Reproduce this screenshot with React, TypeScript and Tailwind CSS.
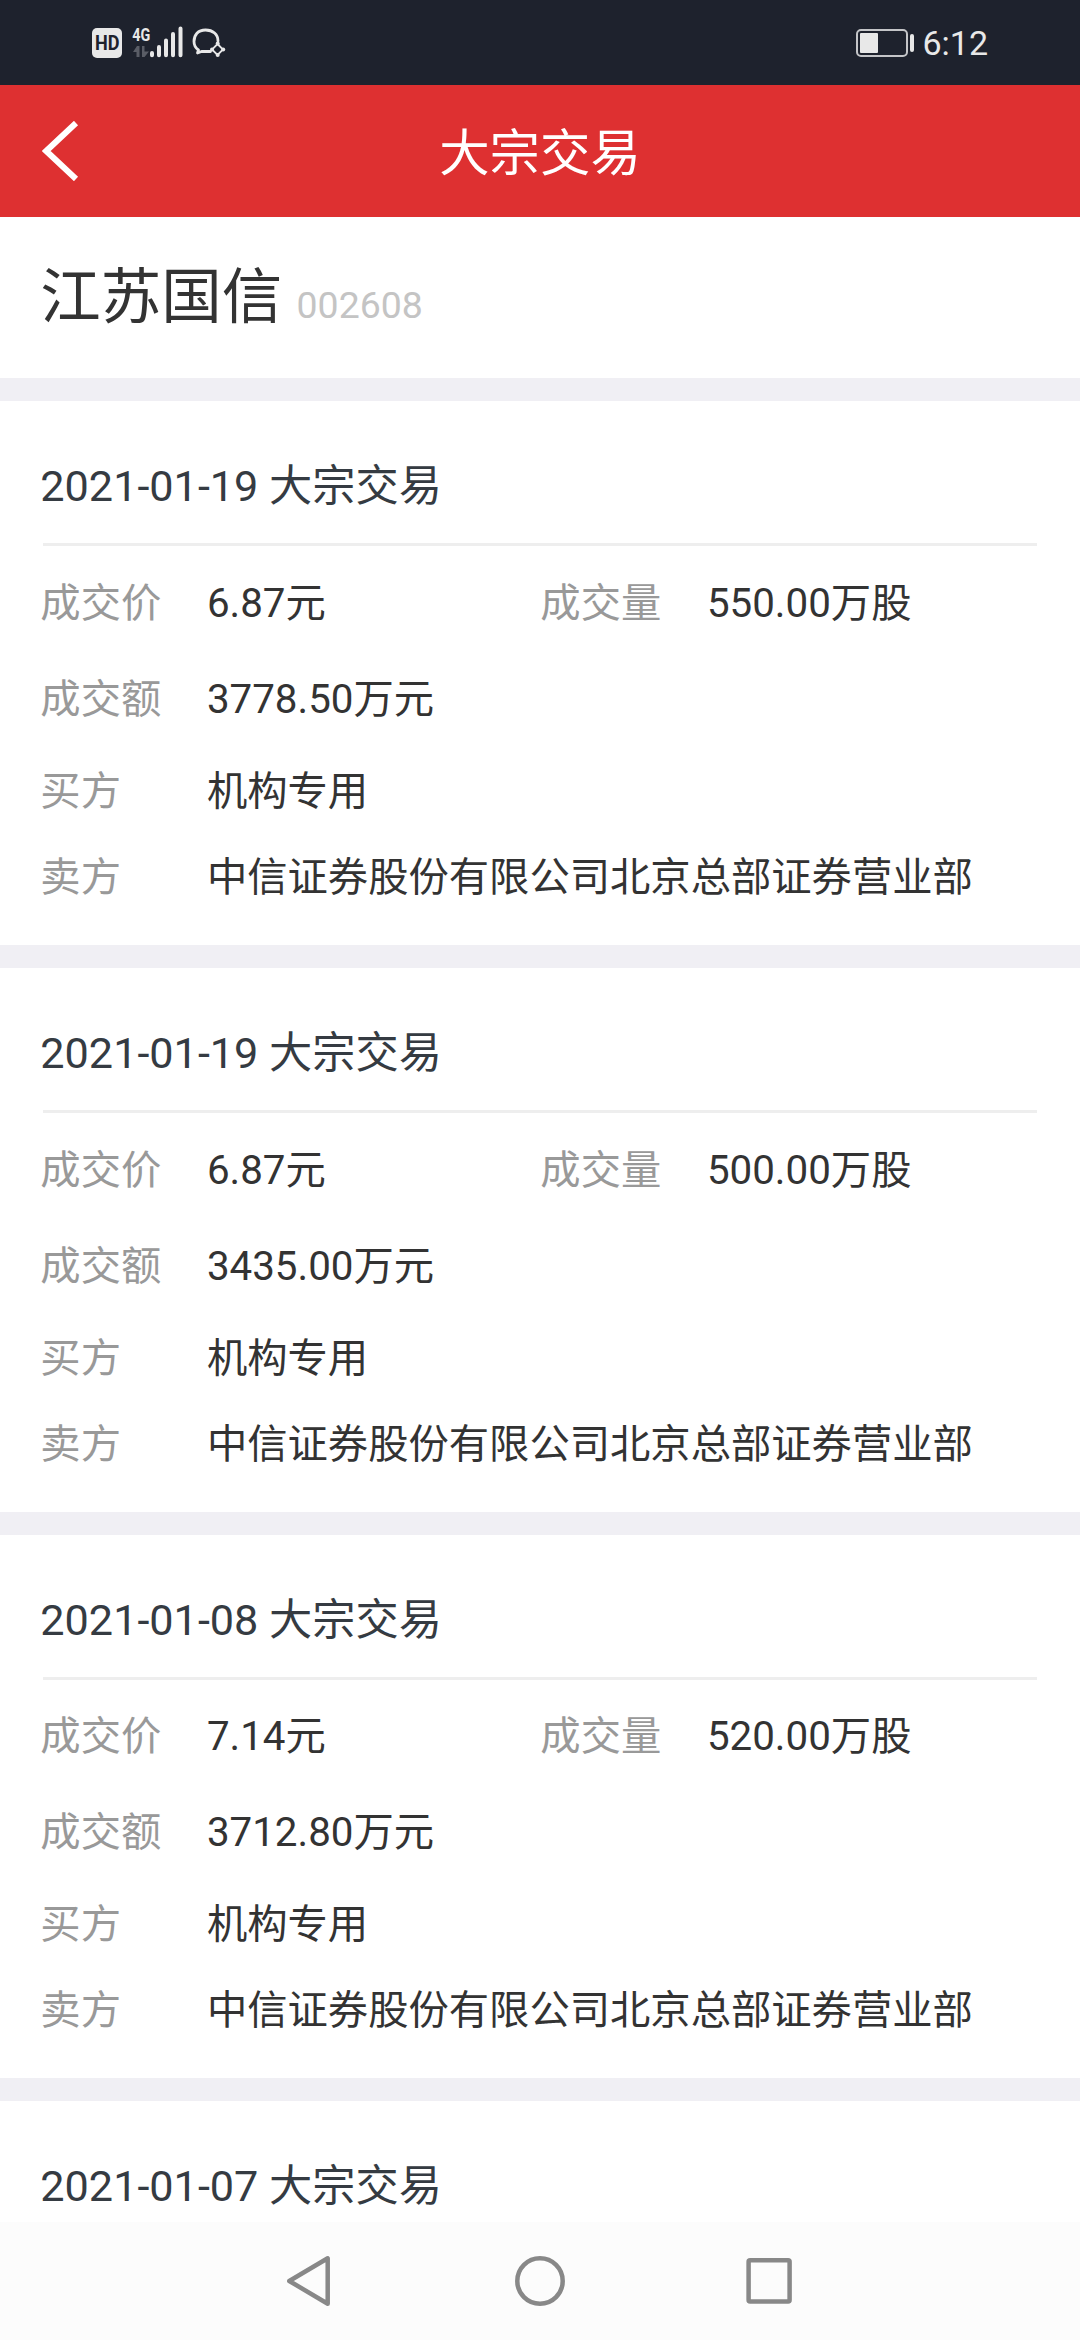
type Trade = {
    date: string;
    details?: {
        price: string;
        volume: string;
        amount: string;
        buyer: string;
        seller: string;
    };
};

const SELLER = "中信证券股份有限公司北京总部证券营业部";

const trades: Trade[] = [
    { date: "2021-01-19", details: { price: "6.87元", volume: "550.00万股", amount: "3778.50万元", buyer: "机构专用", seller: SELLER } },
    { date: "2021-01-19", details: { price: "6.87元", volume: "500.00万股", amount: "3435.00万元", buyer: "机构专用", seller: SELLER } },
    { date: "2021-01-08", details: { price: "7.14元", volume: "520.00万股", amount: "3712.80万元", buyer: "机构专用", seller: SELLER } },
    { date: "2021-01-07" },
];

function StatusBar() {
    return (
        <div className="h-[85px] shrink-0 bg-[#1e222d] flex items-center justify-between px-[92px] text-[#e8e8e8]">
            <svg width="136" height="85" viewBox="92 0 136 85" fill="none">
                <rect x="92" y="28" width="30" height="30" rx="5" fill="#e8e8e8" />
                <text x="95" y="50.200" fontSize="20" fontWeight="700" fill="#1e222d" textLength="24.500" lengthAdjust="spacingAndGlyphs">HD</text>
                <text x="132.300" y="40.600" fontSize="19" fontWeight="700" fill="#e8e8e8" textLength="18" lengthAdjust="spacingAndGlyphs">4G</text>
                <path d="M133 52l4-6h2.500v11h-3v-5zM142 46h2.500v5.500h4.500l-4.500 5.500H142z" fill="#5a5d66" />
                <path d="M152 53v2.300M159 47v8.300M166 40.500v14.800M173 34v21.300M180.500 28.500v26.800" stroke="#e8e8e8" strokeWidth="4" strokeLinecap="round" />
                <path d="M218 41c0-6.500-5-11-12.500-11S194 35 194 41.500c0 4 1.500 6.500 4.500 8.500l-1 3 4-1.500h9" stroke="#e8e8e8" strokeWidth="2.800" strokeLinecap="round" strokeLinejoin="round" />
                <path d="M217.500 44l5.500 5.500-5.500 5.500-5.500-5.500z" stroke="#e8e8e8" strokeWidth="1.800" />
                <g fill="#e8e8e8">
                    <circle cx="217.700" cy="43.500" r="2" />
                    <circle cx="223.200" cy="49.500" r="2" />
                    <circle cx="217.700" cy="55" r="2" />
                    <circle cx="212" cy="49.500" r="2" />
                </g>
            </svg>
            <div className="flex items-center gap-[8px]">
                <svg width="58" height="28" viewBox="0 0 58 28" fill="none">
                    <rect x="1" y="1" width="50" height="26" rx="4" stroke="#c4c5c8" strokeWidth="2" />
                    <rect x="4" y="4" width="18" height="20" rx="1" fill="#e8e8e8" />
                    <rect x="54" y="5" width="4" height="18" rx="2" fill="#e8e8e8" />
                </svg>
                <span className="pt-px text-[34px] leading-[40px]">6:12</span>
            </div>
        </div>
    );
}

function Header() {
    return (
        <header className="h-[132px] shrink-0 bg-[#de3031] grid grid-cols-[1fr_auto_1fr] items-center text-white">
            <svg className="ml-[42px]" width="38" height="60" viewBox="0 0 38 60" fill="none">
                <path d="M34 2L4.200 30L34 58" stroke="white" strokeWidth="6" />
            </svg>
            <h1 className="pt-[6px] text-[50.4px] leading-[60px]">大宗交易</h1>
        </header>
    );
}

function Field({ label, value }: { label: string; value: string }) {
    return (
        <div className="w-[500px] flex whitespace-nowrap">
            <span className="w-[166.6px] shrink-0 text-[#999999]">{label}</span>
            <span className="text-[#333333]">{value}</span>
        </div>
    );
}

function TradeCard({ date, details }: Trade) {
    return (
        <section className="bg-white pl-[40.32px] text-[40.32px] leading-[60px]">
            <h2 className="pt-[56px] text-[43.2px] leading-[60px] text-[#353b42]">{date} 大宗交易</h2>
            {details && (
                <>
                    <div className="mt-[26px] ml-[2.68px] mr-[43px] h-[3px] bg-[#eeeeee]" />
                    <div className="pt-[27.8px] flex">
                        <Field label="成交价" value={details.price} />
                        <Field label="成交量" value={details.volume} />
                    </div>
                    <div className="mt-[36px] flex">
                        <Field label="成交额" value={details.amount} />
                    </div>
                    <div className="mt-[32px] flex">
                        <Field label="买方" value={details.buyer} />
                    </div>
                    <div className="mt-[26px] flex">
                        <Field label="卖方" value={details.seller} />
                    </div>
                </>
            )}
        </section>
    );
}

function NavBar() {
    return (
        <nav className="h-[118px] shrink-0 bg-[#fcfcfc] flex items-center justify-center gap-[180px]">
            <svg width="50" height="54" viewBox="0 0 50 54" fill="none" stroke="#888888" strokeWidth="4.500" strokeLinejoin="round">
                <path d="M42.700 4.300v45.400L4.300 27z" />
            </svg>
            <svg width="50" height="54" viewBox="0 0 50 54" fill="none" stroke="#888888" strokeWidth="4.500">
                <circle cx="25" cy="27" r="22.700" />
            </svg>
            <svg width="50" height="54" viewBox="0 0 50 54" fill="none" stroke="#888888" strokeWidth="4.500">
                <rect x="3.600" y="6.200" width="41" height="41.200" rx="1.500" />
            </svg>
        </nav>
    );
}

export default function App() {
    return (
        <div className="w-[1080px] h-[2340px] flex flex-col overflow-hidden bg-white font-['Roboto','Noto_Sans_CJK_SC',sans-serif]">
            <StatusBar />
            <Header />
            <div className="h-[161px] shrink-0 pl-[40.32px] pt-[41px] flex items-baseline">
                <span className="text-[60.48px] leading-[80px] text-[#333333]">江苏国信</span>
                <span className="ml-[14.4px] text-[37.44px] text-[#c4c4c4]">002608</span>
            </div>
            <main className="flex-1 min-h-0 bg-[#f0eff4] pt-[23.33px] grid grid-rows-[543.67px_543.67px_543.67px_1fr] gap-[23px]">
                {trades.map((trade, i) => (
                    <TradeCard key={i} {...trade} />
                ))}
            </main>
            <NavBar />
        </div>
    );
}
